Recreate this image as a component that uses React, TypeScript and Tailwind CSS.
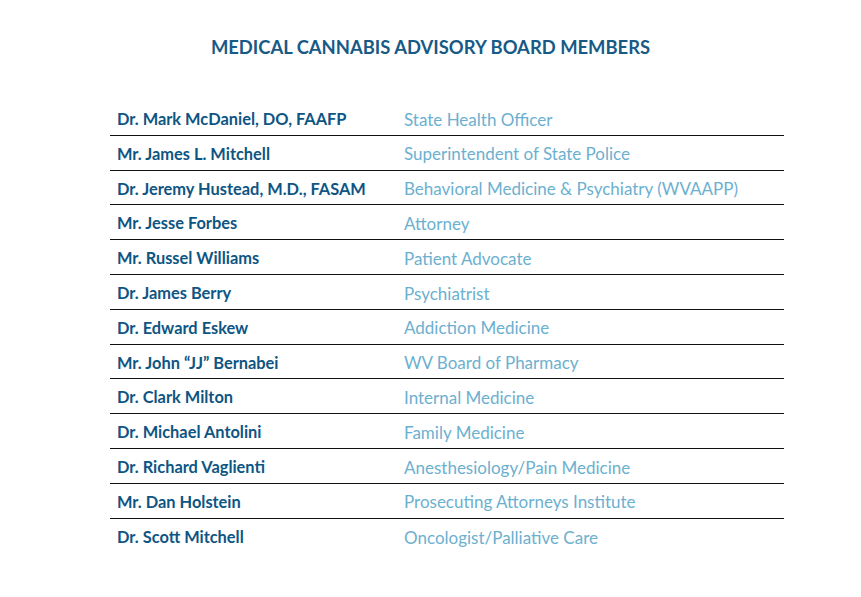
import React from "react";

const rows: [string, string][] = [
  ["Dr. Mark McDaniel, DO, FAAFP", "State Health Officer"],
  ["Mr. James L. Mitchell", "Superintendent of State Police"],
  ["Dr. Jeremy Hustead, M.D., FASAM", "Behavioral Medicine & Psychiatry (WVAAPP)"],
  ["Mr. Jesse Forbes", "Attorney"],
  ["Mr. Russel Williams", "Patient Advocate"],
  ["Dr. James Berry", "Psychiatrist"],
  ["Dr. Edward Eskew", "Addiction Medicine"],
  ["Mr. John \u201cJJ\u201d Bernabei", "WV Board of Pharmacy"],
  ["Dr. Clark Milton", "Internal Medicine"],
  ["Dr. Michael Antolini", "Family Medicine"],
  ["Dr. Richard Vaglienti", "Anesthesiology/Pain Medicine"],
  ["Mr. Dan Holstein", "Prosecuting Attorneys Institute"],
  ["Dr. Scott Mitchell", "Oncologist/Palliative Care"],
];

export default function App() {
  return (
    <div
      className="w-[861px] h-[597px] bg-white"
      style={{ fontFamily: "Lato, 'Open Sans', sans-serif" }}
    >
      <h1 className="pt-[36px] text-center text-[18.4px] font-bold leading-[22px] text-[#185a86]">
        MEDICAL CANNABIS ADVISORY BOARD MEMBERS
      </h1>
      <div className="ml-[110px] mt-[43px] w-[674px]">
        {rows.map(([n, r], i) => (
          <div
            key={i}
            className={
              "flex items-center h-[34.8px] pt-[3px] " +
              (i < rows.length - 1 ? "border-b border-[#111]" : "")
            }
          >
            <div className="w-[294px] pl-[7px] text-[16.4px] font-bold text-[#0e5583]">
              {n}
            </div>
            <div className="text-[17px] text-[#6cb0d0]">{r}</div>
          </div>
        ))}
      </div>
    </div>
  );
}
